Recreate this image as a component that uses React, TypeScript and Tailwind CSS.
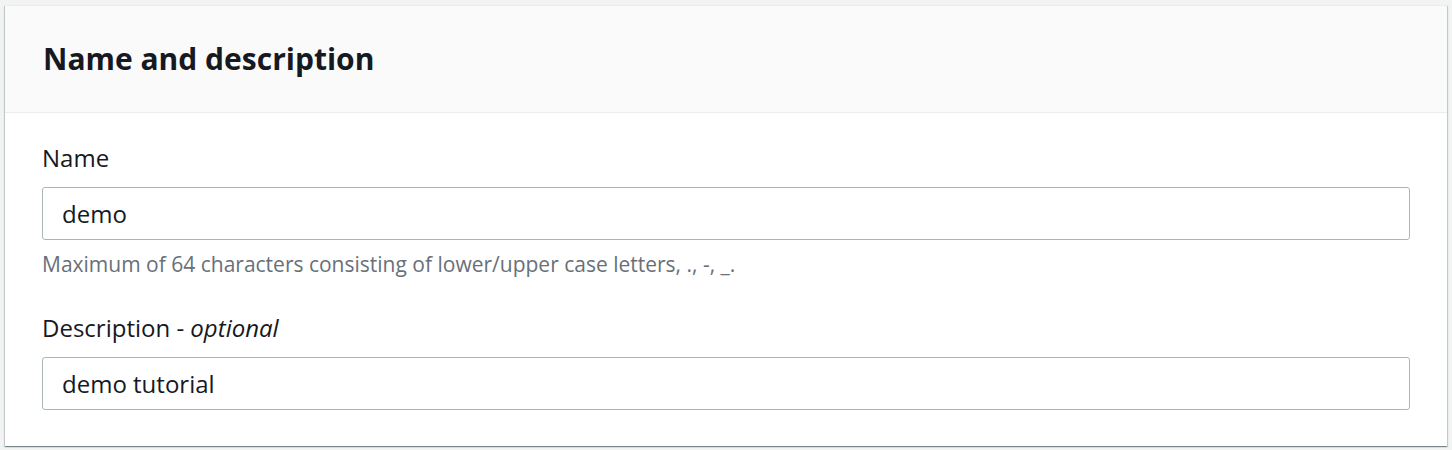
import React, { useState } from "react";

const FONT = { fontFamily: '"Open Sans", "Noto Sans", Arial, sans-serif' };

function Field({
  label,
  optional,
  value,
  onChange,
  hint,
}: {
  label: string;
  optional?: boolean;
  value: string;
  onChange: (v: string) => void;
  hint?: string;
}) {
  return (
    <div>
      <div className="text-[24px] leading-[28px] text-[#16191f]">
        {label}
        {optional && (
          <>
            {" - "}
            <i>optional</i>
          </>
        )}
      </div>
      <input
        className="mt-[15px] block h-[53px] w-full rounded-[3px] border border-[#aab7b8] bg-white px-[19px] text-[24px] text-[#16191f] outline-none"
        style={FONT}
        value={value}
        onChange={(e) => onChange(e.target.value)}
      />
      {hint && (
        <div className="mt-[12px] text-[21px] leading-[24px] text-[#687078]">{hint}</div>
      )}
    </div>
  );
}

export default function App() {
  const [name, setName] = useState("demo");
  const [desc, setDesc] = useState("demo tutorial");

  return (
    <div className="h-[450px] bg-[#f2f3f3] px-[5px] pt-[5px]" style={FONT}>
      <div className="border-t border-[#eaeded] bg-white shadow-[0_1px_1px_0_rgba(0,28,36,0.3),1px_1px_1px_0_rgba(0,28,36,0.15),-1px_1px_1px_0_rgba(0,28,36,0.15)]">
        <div className="flex h-[107px] items-center border-b border-[#eaeded] bg-[#fafafa] px-[38px]">
          <h2 className="text-[30px] font-bold leading-[36px] text-[#16191f]">
            Name and description
          </h2>
        </div>
        <div className="px-[37px] pb-[36px] pt-[31px]">
          <Field
            label="Name"
            value={name}
            onChange={setName}
            hint="Maximum of 64 characters consisting of lower/upper case letters, ., -, _."
          />
          <div className="mt-[38px]">
            <Field label="Description" optional value={desc} onChange={setDesc} />
          </div>
        </div>
      </div>
    </div>
  );
}
